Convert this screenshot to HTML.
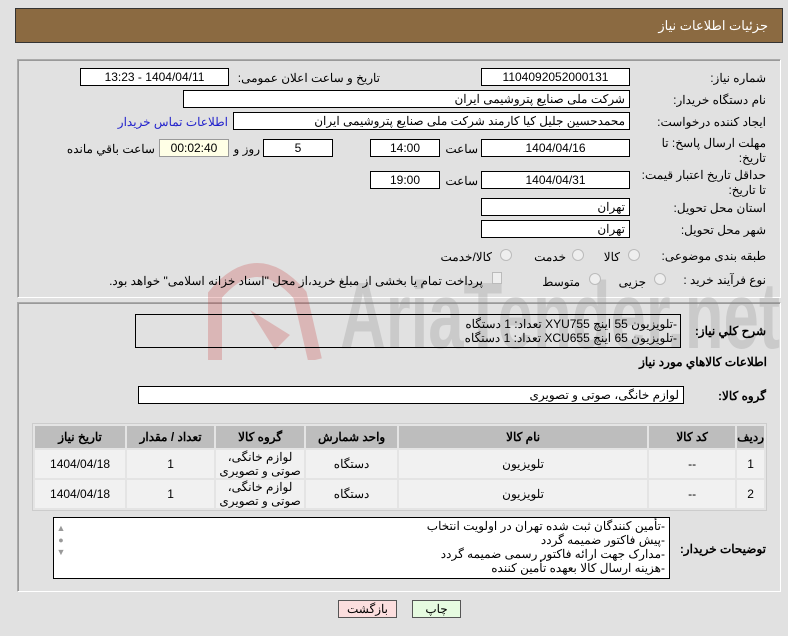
<!DOCTYPE html>
<html><head><meta charset="utf-8"><style>
*{box-sizing:border-box;margin:0;padding:0}
body{width:788px;height:636px;background:#e1e1e1;font-family:Tahoma,"Liberation Sans","Noto Sans CJK SC",sans-serif;font-size:12px;color:#000;position:relative;overflow:hidden;direction:rtl}
.a{position:absolute}
.hdr{left:15px;top:8px;width:768px;height:35px;background:#8b6a41;border:1px solid #333;color:#fff;font-size:13px;padding:9px 14px 0 0}
.panel{left:17px;width:764px;border:1px solid #aaa;border-right-color:#fff;border-bottom-color:#fff;box-shadow:inset 1px 1px 0 #999}
.box{background:#fff;border:1px solid #000;height:18px;line-height:16px;padding:0 4px;text-align:right;white-space:nowrap}
.c{text-align:center}
.lbl{white-space:nowrap}
.rad{width:12px;height:12px;border:1px solid #bbb;border-radius:50%;background:#eee}
table{border-collapse:separate;border-spacing:2px;background:#e4e4e4;border:1px solid #ccc}
th{background:#bdbdbd;height:22px;font-weight:bold;font-size:12px}
td{background:#f1f1f1;height:28px;text-align:center;font-size:12px;line-height:14px}
.btn{height:18px;border:1px solid #555;text-align:center;line-height:16px}
</style></head><body>
<div class="a hdr">جزئیات اطلاعات نیاز</div>
<div class="a panel" style="top:59px;height:239px"></div>
<div class="a panel" style="top:302px;height:290px"></div>

<svg class="a" style="left:195px;top:250px" width="590" height="110" opacity="0.25">
<path d="M20 110 L20 45 Q62 -5 105 45 L120 110" stroke="#c83a3a" stroke-width="14" fill="none"/>
<path d="M55 60 L95 85 L80 100 Z" fill="#c83a3a"/>
<text x="145" y="98" font-size="95" font-weight="bold" fill="#888" font-family="Liberation Sans" textLength="440" lengthAdjust="spacingAndGlyphs" direction="ltr">AriaTender.net</text>
</svg>

<div class="a lbl" style="right:22px;top:71px">شماره نیاز:</div>
<div class="a box c" style="left:481px;top:68px;width:149px">1104092052000131</div>
<div class="a lbl" style="right:408px;top:71px">تاریخ و ساعت اعلان عمومی:</div>
<div class="a box c" style="left:80px;top:68px;width:149px">1404/04/11 - 13:23</div>

<div class="a lbl" style="right:22px;top:93px">نام دستگاه خریدار:</div>
<div class="a box" style="left:183px;top:90px;width:447px">شرکت ملی صنایع پتروشیمی ایران</div>

<div class="a lbl" style="right:22px;top:115px">ایجاد کننده درخواست:</div>
<div class="a box" style="left:233px;top:112px;width:397px">محمدحسین جلیل کیا کارمند شرکت ملی صنایع پتروشیمی ایران</div>
<div class="a lbl" style="right:560px;top:115px;color:#2222cc">اطلاعات تماس خریدار</div>

<div class="a" style="right:22px;top:136px;line-height:15px;width:118px">مهلت ارسال پاسخ: تا تاریخ:</div>
<div class="a box c" style="left:481px;top:139px;width:149px">1404/04/16</div>
<div class="a lbl" style="right:310px;top:142px">ساعت</div>
<div class="a box c" style="left:370px;top:139px;width:70px">14:00</div>
<div class="a box c" style="left:263px;top:139px;width:70px">5</div>
<div class="a lbl" style="right:528px;top:142px">روز و</div>
<div class="a box c" style="left:159px;top:139px;width:70px;background:#ffffe6;border-color:#999">00:02:40</div>
<div class="a lbl" style="right:633px;top:142px">ساعت باقي مانده</div>

<div class="a" style="right:22px;top:168px;line-height:15px;width:130px">حداقل تاریخ اعتبار قیمت: تا تاریخ:</div>
<div class="a box c" style="left:481px;top:171px;width:149px">1404/04/31</div>
<div class="a lbl" style="right:310px;top:174px">ساعت</div>
<div class="a box c" style="left:370px;top:171px;width:70px">19:00</div>

<div class="a lbl" style="right:22px;top:201px">استان محل تحویل:</div>
<div class="a box" style="left:481px;top:198px;width:149px">تهران</div>
<div class="a lbl" style="right:22px;top:223px">شهر محل تحویل:</div>
<div class="a box" style="left:481px;top:220px;width:149px">تهران</div>

<div class="a lbl" style="right:22px;top:249px">طبقه بندی موضوعی:</div>
<div class="a rad" style="left:628px;top:249px"></div><div class="a lbl" style="right:168px;top:250px">کالا</div>
<div class="a rad" style="left:572px;top:249px"></div><div class="a lbl" style="right:222px;top:250px">خدمت</div>
<div class="a rad" style="left:500px;top:249px"></div><div class="a lbl" style="right:296px;top:250px">کالا/خدمت</div>

<div class="a lbl" style="right:22px;top:273px">نوع فرآیند خرید :</div>
<div class="a rad" style="left:654px;top:273px"></div><div class="a lbl" style="right:142px;top:275px">جزیی</div>
<div class="a rad" style="left:589px;top:273px"></div><div class="a lbl" style="right:208px;top:275px">متوسط</div>
<div class="a" style="left:492px;top:272px;width:10px;height:12px;border:1px solid #bbb;background:#eee"></div>
<div class="a lbl" style="right:305px;top:274px">پرداخت تمام یا بخشی از مبلغ خرید،از محل "اسناد خزانه اسلامی" خواهد بود.</div>

<div class="a lbl" style="right:22px;top:324px;font-weight:bold">شرح کلي نیاز:</div>
<div class="a" style="left:135px;top:314px;width:546px;height:34px;border:1px solid #000;text-align:right;padding:2px 3px 0 0;line-height:14px">-تلویزیون 55 اینچ XYU755 تعداد: 1 دستگاه<br>-تلویزیون 65 اینچ XCU655 تعداد: 1 دستگاه</div>
<div class="a lbl" style="right:21px;top:355px;font-weight:bold">اطلاعات کالاهاي مورد نیاز</div>

<div class="a lbl" style="right:22px;top:389px;font-weight:bold">گروه کالا:</div>
<div class="a box" style="left:138px;top:386px;width:546px">لوازم خانگی، صوتی و تصویری</div>

<table class="a" style="left:32px;top:423px;width:735px">
<tr><th style="width:26px">ردیف</th><th style="width:86px">کد کالا</th><th style="width:248px">نام کالا</th><th style="width:91px">واحد شمارش</th><th style="width:88px">گروه کالا</th><th style="width:87px">تعداد / مقدار</th><th>تاریخ نیاز</th></tr>
<tr><td>1</td><td>--</td><td>تلویزیون</td><td>دستگاه</td><td>لوازم خانگی،<br>صوتی و تصویری</td><td>1</td><td>1404/04/18</td></tr>
<tr><td>2</td><td>--</td><td>تلویزیون</td><td>دستگاه</td><td>لوازم خانگی،<br>صوتی و تصویری</td><td>1</td><td>1404/04/18</td></tr>
</table>

<div class="a lbl" style="right:22px;top:542px;font-weight:bold">توضیحات خریدار:</div>
<div class="a" style="left:53px;top:517px;width:617px;height:62px;border:1px solid #000;background:#fff;text-align:right;padding:1px 4px 0 0;line-height:14px;overflow:hidden">-تأمین کنندگان ثبت شده تهران در اولویت انتخاب<br>-پیش فاکتور ضمیمه گردد<br>-مدارک جهت ارائه فاکتور رسمی ضمیمه گردد<br>-هزینه ارسال کالا بعهده تأمین کننده</div>
<div class="a" style="left:55px;top:522px;color:#999;font-size:9px;line-height:12px;text-align:center;width:12px">▲<br>●<br>▼</div>

<div class="a btn" style="left:338px;top:600px;width:59px;background:#fcdede">بازگشت</div>
<div class="a btn" style="left:412px;top:600px;width:49px;background:#e6fbe0">چاپ</div>
</body></html>
